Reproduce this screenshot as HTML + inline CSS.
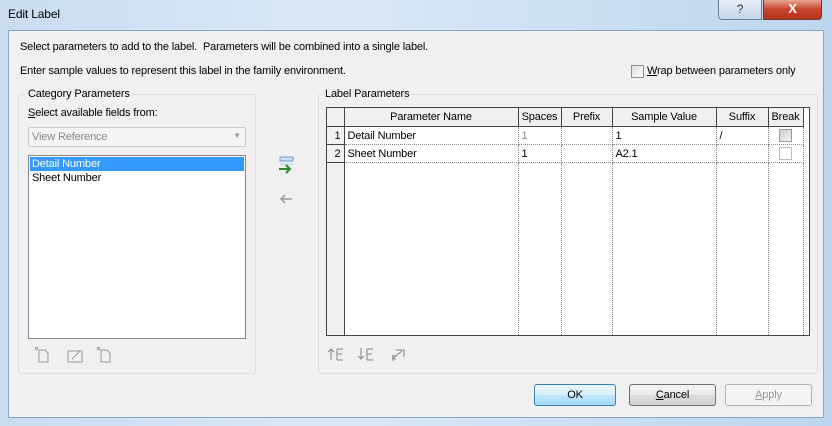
<!DOCTYPE html><html><head><style>
*{margin:0;padding:0;box-sizing:border-box}
body{width:832px;height:426px;overflow:hidden;background:linear-gradient(90deg,#c9dcf0,#dbe8f7 40%,#bcd5ee);font-family:"Liberation Sans",sans-serif;font-size:11px;color:#000;position:relative;letter-spacing:-0.15px}
.a{position:absolute}
.client{left:8px;top:30px;width:816px;height:388px;background:#f0f0f0;border:1px solid #8ea6c0}
.grp{border:1px solid #d5dfe5;border-radius:3px}
.gt{background:#f0f0f0;padding:0 2px}
.btn{border:1px solid #707070;border-radius:3px;background:linear-gradient(#f2f2f2,#ebebeb 50%,#dddddd 51%,#cfcfcf);text-align:center;line-height:20px}
td,th{font-weight:normal;border-right:1px dotted #888;border-bottom:1px dotted #888;height:18px;padding:1px 3px 0;white-space:nowrap;overflow:hidden}
table{border-collapse:collapse;font-size:11px;table-layout:fixed;width:476px}
</style></head><body>
<div class="a" style="left:8px;top:7px;font-size:12px">Edit Label</div>
<div class="a" style="left:718px;top:0;width:44px;height:20px;border:1px solid #6b7f99;border-top:none;border-radius:0 0 0 4px;background:linear-gradient(#e6eef8,#c4d6ea);text-align:center;font-size:12px;color:#333;line-height:18px">?</div>
<div class="a" style="left:763px;top:0;width:59px;height:20px;border:1px solid #6b3a3a;border-top:none;border-radius:0 0 4px 0;background:linear-gradient(#e8a795,#c7442c 50%,#b8301b);text-align:center;color:#fff;font-weight:bold;font-size:13px;line-height:18px">X</div>
<div class="a client"></div>
<div class="a" style="left:20px;top:41px">Select parameters to add to the label.&nbsp; Parameters will be combined into a single label.</div>
<div class="a" style="left:20px;top:65px">Enter sample values to represent this label in the family environment.</div>
<div class="a" style="left:631px;top:65px;width:13px;height:13px;border:1px solid #8f8f8f;background:linear-gradient(135deg,#ddd,#fff)"></div>
<div class="a" style="left:647px;top:65px"><u>W</u>rap between parameters only</div>

<div class="a grp" style="left:18px;top:94px;width:238px;height:280px"></div>
<div class="a gt" style="left:26px;top:88px">Category Parameters</div>
<div class="a" style="left:28px;top:107px"><u>S</u>elect available fields from:</div>
<div class="a" style="left:28px;top:127px;width:218px;height:20px;border:1px solid #c8c8c8;border-radius:2px;background:#f4f4f4;color:#888;padding:3px 3px">View Reference<span style="position:absolute;right:4px;top:3px;font-size:8px;color:#999">▼</span></div>
<div class="a" style="left:28px;top:155px;width:218px;height:184px;border:1px solid #828790;background:#fff">
<div style="background:#3399ff;color:#fff;margin:1px;height:14px;padding:0 2px;line-height:14px">Detail Number</div>
<div style="padding:0 3px;line-height:13px">Sheet Number</div></div>
<svg class="a" style="left:30px;top:344px" width="90" height="20" fill="none" stroke="#999" stroke-width="1">
<path d="M9 6h6l3 3v9H9z M5 3l3 3M8 3l-3 3"/><path d="M38 7h14v11H38z M42 15l8-8"/><path d="M71 6h6l3 3v9H71z M67 3l3 3M70 3l-3 3"/></svg>
<svg class="a" style="left:276px;top:156px" width="20" height="50">
<rect x="4" y="1" width="13" height="4" fill="#cfe0f5" stroke="#6c9bd2"/><rect x="4" y="7" width="13" height="2" fill="#cfe0f5"/>
<path d="M3 13h11M10 9l4 4-4 4" stroke="#2a8a2a" stroke-width="2" fill="none"/>
<path d="M5 43h11M9 39l-4 4 4 4" stroke="#999" stroke-width="1.5" fill="none"/></svg>

<div class="a grp" style="left:318px;top:94px;width:500px;height:280px"></div>
<div class="a gt" style="left:323px;top:88px">Label Parameters</div>
<div class="a" style="left:326px;top:107px;width:484px;height:229px;border:1px solid #444;background:#fff;overflow:hidden">
<div class="a" style="left:0;top:0;width:17px;height:229px;background:#f0f0f0;border-right:1px solid #444"></div>
<table class="a" style="left:0;top:0">
<colgroup><col style="width:17px"><col style="width:174px"><col style="width:43px"><col style="width:51px"><col style="width:104px"><col style="width:52px"><col style="width:35px"></colgroup>
<tr style="background:#f0f0f0"><th style="border-right:1px solid #444;border-bottom:1px solid #444"></th><th style="border-right:1px solid #444;border-bottom:1px solid #444">Parameter Name</th><th style="border-right:1px solid #444;border-bottom:1px solid #444">Spaces</th><th style="border-right:1px solid #444;border-bottom:1px solid #444">Prefix</th><th style="border-right:1px solid #444;border-bottom:1px solid #444">Sample Value</th><th style="border-right:1px solid #444;border-bottom:1px solid #444">Suffix</th><th style="border-right:1px solid #444;border-bottom:1px solid #444;padding:1px 1px 0">Break</th></tr>
<tr><td style="text-align:right;background:#f0f0f0;border-right:1px solid #444;border-bottom:1px solid #444">1</td><td>Detail Number</td><td style="color:#888">1</td><td></td><td>1</td><td>/</td><td><div style="width:13px;height:13px;border:1px solid #999;background:linear-gradient(135deg,#ccc,#f4f4f4);margin:auto"></div></td></tr>
<tr><td style="text-align:right;background:#f0f0f0;border-right:1px solid #444;border-bottom:1px solid #444">2</td><td>Sheet Number</td><td>1</td><td></td><td>A2.1</td><td></td><td><div style="width:13px;height:13px;border:1px solid #bbb;margin:auto"></div></td></tr>
<tr style="height:190px"><td style="background:#f0f0f0;border-right:1px solid #444;border-bottom:1px solid #444"></td><td></td><td></td><td></td><td></td><td></td><td></td></tr>
</table></div>
<svg class="a" style="left:326px;top:344px" width="90" height="20" fill="none" stroke="#999" stroke-width="1.3">
<path d="M5 16V5M2 8l3-3 3 3M11 5h6M11 10h5M11 16h6M11 5v11"/><path d="M35 4v11M32 12l3 3 3-3M41 5h6M41 10h5M41 16h6M41 5v11"/><path d="M66 15l10-8M70 6h8v7M66 12h4M66 15h4M67 11v6"/></svg>

<div class="a btn" style="left:534px;top:384px;width:82px;height:22px;border-color:#3c7fb1;background:linear-gradient(#eaf6fd,#d9f0fc 50%,#bee6fd 51%,#a7d9f5)">OK</div>
<div class="a btn" style="left:629px;top:384px;width:87px;height:22px"><u>C</u>ancel</div>
<div class="a btn" style="left:725px;top:384px;width:87px;height:22px;border-color:#adb2b5;background:#f4f4f4;color:#999"><u>A</u>pply</div>
</body></html>
